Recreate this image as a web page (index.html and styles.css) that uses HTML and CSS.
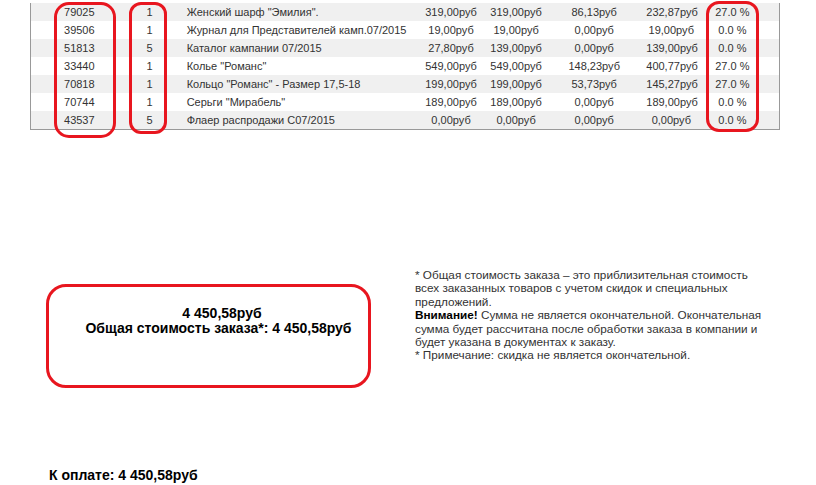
FILE: index.html
```html
<!DOCTYPE html>
<html lang="ru">
<head>
	<meta charset="UTF-8">
	<title>Заказ</title>
	<link rel="stylesheet" href="styles.css">
</head>
<body>
	<div class="order">
		<table class="items">
			<colgroup>
				<col class="c-code"><col class="c-qty"><col class="c-name"><col class="c-price">
				<col class="c-sum"><col class="c-disc"><col class="c-total"><col class="c-pct"><col class="c-end">
			</colgroup>
			<tr><td>79025</td><td>1</td><td class="name">Женский шарф "Эмилия".</td><td>319,00руб</td><td>319,00руб</td><td>86,13руб</td><td>232,87руб</td><td>27.0 %</td><td></td></tr>
			<tr><td>39506</td><td>1</td><td class="name">Журнал для Представителей камп.07/2015</td><td>19,00руб</td><td>19,00руб</td><td>0,00руб</td><td>19,00руб</td><td>0.0 %</td><td></td></tr>
			<tr><td>51813</td><td>5</td><td class="name">Каталог кампании 07/2015</td><td>27,80руб</td><td>139,00руб</td><td>0,00руб</td><td>139,00руб</td><td>0.0 %</td><td></td></tr>
			<tr><td>33440</td><td>1</td><td class="name">Колье "Романс"</td><td>549,00руб</td><td>549,00руб</td><td>148,23руб</td><td>400,77руб</td><td>27.0 %</td><td></td></tr>
			<tr><td>70818</td><td>1</td><td class="name">Кольцо "Романс" - Размер 17,5-18</td><td>199,00руб</td><td>199,00руб</td><td>53,73руб</td><td>145,27руб</td><td>27.0 %</td><td></td></tr>
			<tr><td>70744</td><td>1</td><td class="name">Серьги "Мирабель"</td><td>189,00руб</td><td>189,00руб</td><td>0,00руб</td><td>189,00руб</td><td>0.0 %</td><td></td></tr>
			<tr><td>43537</td><td>5</td><td class="name">Флаер распродажи С07/2015</td><td>0,00руб</td><td>0,00руб</td><td>0,00руб</td><td>0,00руб</td><td>0.0 %</td><td></td></tr>
		</table>
		<span class="mark mark-code"></span>
		<span class="mark mark-qty"></span>
		<span class="mark mark-pct"></span>
	</div>

	<div class="summary">
		<div class="total-box">
			<div class="total-sum">4 450,58руб</div>
			<div class="total-line">Общая стоимость заказа*: 4 450,58руб</div>
		</div>
		<div class="notes">
			* Общая стоимость заказа – это приблизительная стоимость всех заказанных товаров с учетом скидок и специальных предложений.<br>
			<b>Внимание!</b> Сумма не является окончательной. Окончательная сумма будет рассчитана после обработки заказа в компании и будет указана в документах к заказу.<br>
			* Примечание: скидка не является окончательной.
		</div>
	</div>

	<div class="pay">К оплате: 4 450,58руб</div>
</body>
</html>
```

FILE: styles.css
```css
*{
	margin: 0;
	padding: 0;
}
body{
	background: #fff;
	font-family: "Liberation Sans", Arial, sans-serif;
	color: #333;
}
.order{
	position: relative;
	width: 750px;
	margin: 3px 0 0 30px;
}
.items{
	width: 750px;
	table-layout: fixed;
	border-collapse: collapse;
	border-left: 1px solid #999;
	border-right: 1px solid #999;
	border-bottom: 1px solid #999;
	font-size: 11px;
}
.items td{
	height: 18px;
	padding: 0;
	text-align: center;
	white-space: nowrap;
	overflow: visible;
	line-height: 18px;
}
.items td.name{
	text-align: left;
	padding-left: 15px;
}
.items tr:nth-child(odd){
	background: #f0f0f0;
}
.c-code{ width: 97px; }
.c-qty{ width: 44px; }
.c-name{ width: 240px; }
.c-price{ width: 78px; }
.c-sum{ width: 52px; }
.c-disc{ width: 104px; }
.c-total{ width: 50px; }
.c-pct{ width: 72px; }
.c-end{ width: 11px; }

/* red hand-drawn marks over the columns */
.mark{
	position: absolute;
	border: 3px solid #e8161f;
	box-sizing: border-box;
}
.mark-code{
	left: 24px;
	top: -1px;
	width: 62px;
	height: 136px;
	border-radius: 15px;
}
.mark-qty{
	left: 99px;
	top: -1px;
	width: 38px;
	height: 132px;
	border-radius: 12px;
}
.mark-pct{
	left: 676px;
	top: -2px;
	width: 53px;
	height: 131px;
	border-radius: 13px;
}

.summary{
	display: flex;
	align-items: flex-start;
	margin-top: 138px;
}
.total-box{
	width: 325px;
	height: 104px;
	box-sizing: border-box;
	margin: 16px 0 0 46px;
	padding: 19px 0 0 20px;
	border: 3px solid #e8161f;
	border-radius: 20px;
	text-align: center;
	font-size: 14px;
	font-weight: bold;
	line-height: 15px;
	color: #000;
}
.total-sum{
	padding-left: 7px;
}
.notes{
	width: 352px;
	margin-left: 44px;
	font-size: 11.75px;
	line-height: 13.4px;
	color: #333;
}
.notes b{
	color: #000;
}
.pay{
	margin: 79px 0 0 49px;
	font-size: 14px;
	font-weight: bold;
	line-height: 16px;
	color: #000;
}
```
